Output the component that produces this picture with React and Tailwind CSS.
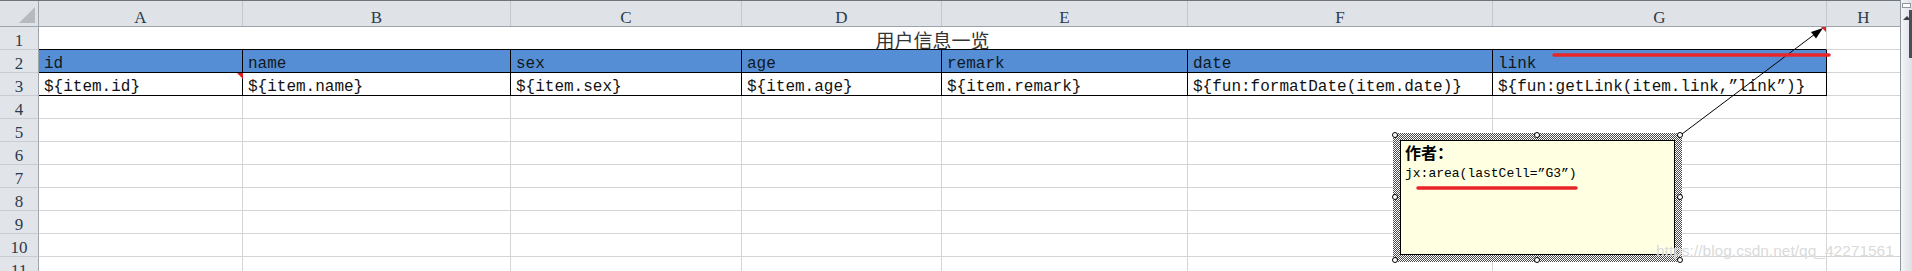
import React from 'react'
import clsx from 'clsx'

const cols = [
  { key: 'A', w: 'w-[204px]', head: 'id', tpl: '${item.id}' },
  { key: 'B', w: 'w-[268px]', head: 'name', tpl: '${item.name}' },
  { key: 'C', w: 'w-[231px]', head: 'sex', tpl: '${item.sex}' },
  { key: 'D', w: 'w-[200px]', head: 'age', tpl: '${item.age}' },
  { key: 'E', w: 'w-[246px]', head: 'remark', tpl: '${item.remark}' },
  { key: 'F', w: 'w-[305px]', head: 'date', tpl: '${fun:formatDate(item.date)}' },
  { key: 'G', w: 'w-[334px]', head: 'link', tpl: '${fun:getLink(item.link,”link”)}' },
]

const mono = "font-['Liberation_Mono','Noto_Sans_CJK_SC',monospace]"
const serif = "font-['Liberation_Serif',serif]"

const RowHead = ({ n }) => (
  <div className={clsx('w-[39px] shrink-0 h-full bg-[#e1e5ea] border-r border-b border-r-[#9ea4ab] border-b-[#c9cdd2] flex items-end justify-center text-[17px] leading-[17px] text-[#2d3a4a]', serif)}>
    {n}
  </div>
)

const Cell = ({ w, className, children }) => (
  <div className={clsx('shrink-0 h-full border-r border-b flex items-end px-[5px] overflow-hidden whitespace-nowrap text-[16px] leading-[16px] text-[#111]', mono, w, className)}>
    {children}
  </div>
)

// resize handle on the selected note
const Handle = ({ className }) => (
  <div className={clsx('absolute w-[6px] h-[6px] rounded-full bg-white border border-black', className)} />
)

export default function App() {
  const blank = [4, 5, 6, 7, 8, 9, 10, 11]

  return (
    <div className="relative w-[1912px] h-[271px] overflow-hidden bg-white flex">
      <div className="w-[1900px] shrink-0 flex flex-col">
        {/* column letters */}
        <div className="h-[27px] shrink-0 flex border-t border-t-[#6f757c] border-b border-b-[#9ea4ab] bg-[#dfe3e8]">
          <div className="w-[39px] shrink-0 h-full border-r border-r-[#9ea4ab] relative">
            <div className="absolute right-[3px] bottom-[3px] w-0 h-0 border-l-[16px] border-l-transparent border-b-[16px] border-b-[#b7bbc0]" />
          </div>
          {cols.map((c) => (
            <div key={c.key} className={clsx('shrink-0 h-full border-r border-r-[#c3c8ce] flex items-end justify-center text-[17px] leading-[17px] text-[#2d3a4a]', serif, c.w)}>
              {c.key}
            </div>
          ))}
          <div className={clsx('w-[73px] shrink-0 h-full flex items-end justify-center text-[17px] leading-[17px] text-[#2d3a4a]', serif)}>H</div>
        </div>

        {/* row 1: merged title */}
        <div className="h-[23px] shrink-0 flex">
          <RowHead n={1} />
          <div className="w-[1788px] shrink-0 h-full border-r border-b border-r-[#d4d4d4] border-b-black flex items-end justify-center font-['Noto_Sans_CJK_SC',sans-serif] text-[19px] leading-[19px] text-[#333]">
            用户信息一览
          </div>
          <div className="w-[73px] shrink-0 h-full border-b border-b-[#d4d4d4]" />
        </div>

        {/* row 2: field names */}
        <div className="h-[23px] shrink-0 flex">
          <RowHead n={2} />
          {cols.map((c) => (
            <Cell key={c.key} w={c.w} className="bg-[#558ed5] border-r-black border-b-black text-[#101820]">
              {c.head}
            </Cell>
          ))}
          <Cell w="w-[73px]" className="border-r-0 border-b-[#d4d4d4]" />
        </div>

        {/* row 3: templates */}
        <div className="h-[23px] shrink-0 flex">
          <RowHead n={3} />
          {cols.map((c) => (
            <Cell key={c.key} w={c.w} className="border-r-black border-b-black">
              {c.tpl}
            </Cell>
          ))}
          <Cell w="w-[73px]" className="border-r-0 border-b-[#d4d4d4]" />
        </div>

        {blank.map((n) => (
          <div key={n} className="h-[23px] shrink-0 flex">
            <RowHead n={n} />
            {cols.map((c) => (
              <Cell key={c.key} w={c.w} className="border-r-[#d4d4d4] border-b-[#d4d4d4]" />
            ))}
            <Cell w="w-[73px]" className="border-r-0 border-b-[#d4d4d4]" />
          </div>
        ))}
      </div>

      {/* vertical scrollbar */}
      <div className="w-[12px] shrink-0 h-full border-l border-l-[#8f959c] bg-gradient-to-r from-[#f4f5f8] to-[#dce0e6] relative">
        <div className="absolute left-[1px] top-[3px] w-[9px] h-[5px] border border-[#8f959c] bg-white" />
        <div className="absolute left-[2px] top-[16px] w-0 h-0 border-l-[4px] border-r-[4px] border-b-[4px] border-l-transparent border-r-transparent border-b-[#3c3f44]" />
        <div className="absolute right-0 top-[10px] w-[3px] h-[48px] bg-[#4a4e54]" />
      </div>

      {/* comment indicators */}
      <div className="absolute left-[237px] top-[73px] w-0 h-0 border-l-[6px] border-l-transparent border-t-[6px] border-t-[#e02020]" />
      <div className="absolute left-[1821px] top-[27px] w-0 h-0 border-l-[5px] border-l-transparent border-t-[5px] border-t-[#e02020]" />

      {/* comment note */}
      <div className="absolute left-[1393px] top-[133px] w-[289px] h-[129px] p-[7px] bg-[repeating-conic-gradient(#4a4a4a_0_25%,#ffffff_0_50%)] bg-[length:2px_2px]">
        <div className="w-full h-full bg-[#ffffe1] border border-black px-[4px] pt-[1px]">
          <div className="font-['Noto_Sans_CJK_SC',sans-serif] font-bold text-[16px] leading-[20px] text-black">作者：</div>
          <div className={clsx('mt-[3px] text-[13px] leading-[18px] text-black', mono)}>jx:area(lastCell=”G3”)</div>
        </div>
        <Handle className="left-[-1px] top-[-1px]" />
        <Handle className="left-[141px] top-[-1px]" />
        <Handle className="right-[-1px] top-[-1px]" />
        <Handle className="left-[-1px] top-[61px]" />
        <Handle className="right-[-1px] top-[61px]" />
        <Handle className="left-[-1px] bottom-[-1px]" />
        <Handle className="left-[141px] bottom-[-1px]" />
        <Handle className="right-[-1px] bottom-[-1px]" />
      </div>

      {/* arrow + red marks */}
      <svg className="absolute inset-0 pointer-events-none" width="1912" height="271" viewBox="0 0 1912 271">
        <line x1="1682" y1="134" x2="1815" y2="34" stroke="#000" strokeWidth="1" />
        <polygon points="1823,28 1816,38.4 1811,32" fill="#000" />
        <line x1="1554" y1="55" x2="1829" y2="55" stroke="#e8262a" strokeWidth="3.5" strokeLinecap="round" />
        <line x1="1418" y1="188" x2="1576" y2="188" stroke="#e8262a" strokeWidth="3.5" strokeLinecap="round" />
      </svg>

      {/* watermark */}
      <div className="absolute left-[1656px] top-[240px] font-['Liberation_Sans',sans-serif] text-[15.5px] leading-[22px] text-[#d0d0d0]/80 [text-shadow:0_0_1px_#fff] pointer-events-none whitespace-nowrap">
        https://blog.csdn.net/qq_42271561
      </div>
    </div>
  )
}
